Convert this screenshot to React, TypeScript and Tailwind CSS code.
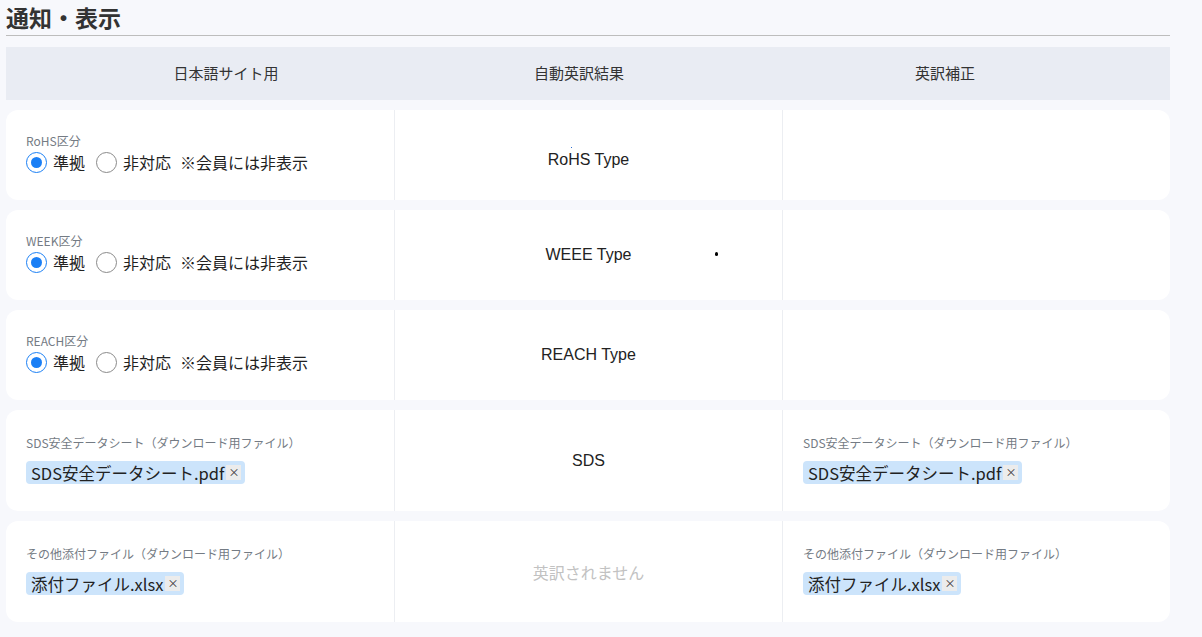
// 通知・表示 section: Japanese site settings vs. auto translation vs. correction

const jp = { fontFamily: '"Noto Sans CJK JP", "Noto Sans", sans-serif' };
const en = { fontFamily: '"Liberation Sans", Arial, sans-serif' };

function Radio({ checked }: { checked?: boolean }) {
  return (
    <span
      className={`w-[21px] h-[21px] rounded-full border flex items-center justify-center bg-white shrink-0 ${
        checked ? "border-[#1a7ff5] border-[1.5px]" : "border-[#8a8a8a]"
      }`}
    >
      {checked && <span className="w-[11px] h-[11px] rounded-full bg-[#1a7ff5]" />}
    </span>
  );
}

function RadioCell({ label }: { label: string }) {
  return (
    <div className="flex flex-col justify-center pl-5 pb-[4px]" style={jp}>
      <div className="text-[12px] leading-[16px] text-[#747b84]">{label}</div>
      <div className="flex items-center mt-[2px] text-[16px] leading-[22px] text-[#222]">
        <Radio checked />
        <span className="ml-[6px]">準拠</span>
        <span className="ml-[11px]"><Radio /></span>
        <span className="ml-[6px]">非対応</span>
        <span className="ml-[9px]">※会員には非表示</span>
      </div>
    </div>
  );
}

function FileCell({ label, file }: { label: string; file: string }) {
  return (
    <div className="flex flex-col justify-center pl-5 pb-[2px]" style={jp}>
      <div className="text-[12px] leading-[16px] text-[#747b84]">{label}</div>
      <div className="mt-[10px]">
        <span className="inline-flex items-center h-[23px] pl-[5px] pr-[4px] rounded-[4px] bg-[#cce4fb] text-[16.5px] text-[#222]">
          {file}
          <span className="ml-[2px] w-[15px] h-[15px] bg-[#ececec] text-[11px] leading-[15px] text-center text-[#333]">×</span>
        </span>
      </div>
    </div>
  );
}

function Row({
  h,
  left,
  middle,
  right,
}: {
  h: string;
  left: React.ReactNode;
  middle: React.ReactNode;
  right?: React.ReactNode;
}) {
  return (
    <div className={`grid grid-cols-3 bg-white rounded-xl ${h}`}>
      {left}
      <div className="relative border-l border-[#eceef2] flex items-center justify-center">{middle}</div>
      <div className="border-l border-[#eceef2] flex flex-col justify-center">{right}</div>
    </div>
  );
}

export default function App() {
  return (
    <div className="min-h-[637px] bg-[#f7f8fc] pl-[6px] pr-[32px] text-[#333]">
      {/* Section title */}
      <div className="h-[36px] border-b border-[#bdbdbd] flex items-start">
        <h2 className="text-[23px] font-bold leading-[34px] text-[#333]" style={jp}>
          通知・表示
        </h2>
      </div>

      {/* Column headers */}
      <div
        className="mt-[11px] h-[53px] bg-[#e9ecf3] grid grid-cols-[440px_266px_1fr] items-center text-center text-[15px] text-[#333]"
        style={jp}
      >
        <div>日本語サイト用</div>
        <div>自動英訳結果</div>
        <div className="pl-2">英訳補正</div>
      </div>

      <div className="mt-[10px] flex flex-col gap-[10px]">
        <Row
          h="h-[90px]"
          left={<RadioCell label="RoHS区分" />}
          middle={
            <>
              <span className="absolute left-[176px] top-[37px] w-[1px] h-[1px] bg-[#2f6fd0]" />
              <span className="mt-[10px] text-[16px] text-[#222]" style={en}>RoHS Type</span>
            </>
          }
        />
        <Row
          h="h-[90px]"
          left={<RadioCell label="WEEK区分" />}
          middle={
            <>
              <span className="absolute left-[320px] top-[42px] w-[3px] h-[4px] rounded-full bg-black" />
              <span className="text-[16px] text-[#222]" style={en}>WEEE Type</span>
            </>
          }
        />
        <Row
          h="h-[90px]"
          left={<RadioCell label="REACH区分" />}
          middle={<span className="text-[16px] text-[#222]" style={en}>REACH Type</span>}
        />
        <Row
          h="h-[101px]"
          left={<FileCell label="SDS安全データシート（ダウンロード用ファイル）" file="SDS安全データシート.pdf" />}
          middle={<span className="text-[16px] text-[#222]" style={en}>SDS</span>}
          right={<FileCell label="SDS安全データシート（ダウンロード用ファイル）" file="SDS安全データシート.pdf" />}
        />
        <Row
          h="h-[101px]"
          left={<FileCell label="その他添付ファイル（ダウンロード用ファイル）" file="添付ファイル.xlsx" />}
          middle={<span className="text-[16px] text-[#c2c2c2]" style={jp}>英訳されません</span>}
          right={<FileCell label="その他添付ファイル（ダウンロード用ファイル）" file="添付ファイル.xlsx" />}
        />
      </div>
    </div>
  );
}
